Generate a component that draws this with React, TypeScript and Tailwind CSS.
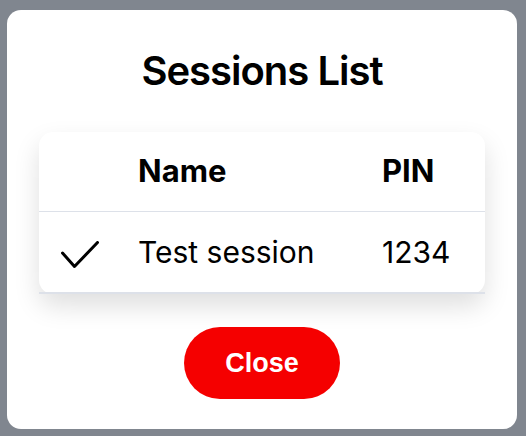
const sessions = [{ name: "Test session", pin: "1234", active: true }];

function CheckMark() {
  return (
    <svg width="40" height="30" viewBox="0 0 40 30" fill="none">
      <path
        d="M2.5 12L14.5 25.5L37.5 1.5"
        stroke="black"
        strokeWidth="3"
        strokeLinecap="round"
        strokeLinejoin="round"
      />
    </svg>
  );
}

export default function App() {
  return (
    <div className="w-[526px] h-[436px] bg-[#80868f] pt-[10px] pl-[7px] font-['Inter',sans-serif]">
      <div className="w-[510px] h-[419px] bg-white rounded-[14px] flex flex-col items-center px-8">
        <h1 className="mt-[37px] text-[40px] leading-[48px] font-semibold text-black tracking-[-1px]">
          Sessions List
        </h1>

        {/* table */}
        <div className="mt-[37px] w-full rounded-[14px] bg-white shadow-[0_12px_26px_rgba(0,0,0,0.13)]">
          <div className="grid grid-cols-[99px_244px_1fr] items-center h-[80px] border-b border-[#dde1e9] text-[31px] font-bold text-black">
            <div />
            <div>Name</div>
            <div>PIN</div>
          </div>
          {sessions.map((s) => (
            <div
              key={s.pin}
              className="grid grid-cols-[99px_244px_1fr] items-center h-[82px] border-b-2 border-[#dde1e9] text-[30px] text-black"
            >
              <div className="pl-[21px] pt-[8px]">{s.active && <CheckMark />}</div>
              <div>{s.name}</div>
              <div>{s.pin}</div>
            </div>
          ))}
        </div>

        <button
          type="button"
          className="mt-[33px] w-[156px] h-[72px] rounded-full bg-[#f50000] text-white text-[27px] font-bold font-['Liberation_Sans',sans-serif]"
        >
          Close
        </button>
      </div>
    </div>
  );
}
